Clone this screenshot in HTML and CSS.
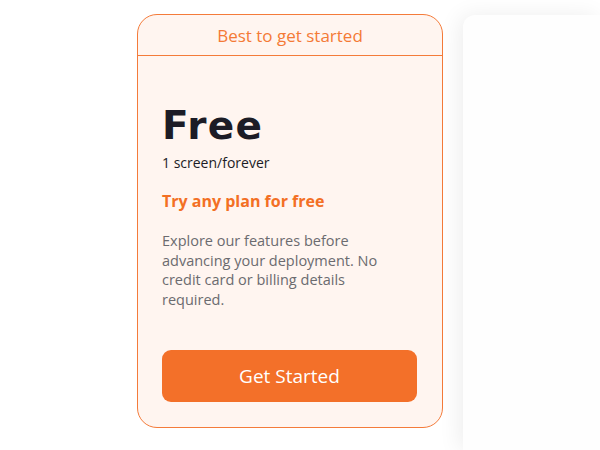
FILE: index.html
```html
<!DOCTYPE html>
<html lang="en">
<head>
<meta charset="utf-8">
<title>Pricing</title>
<link rel="stylesheet" href="styles.css">
</head>
<body>
<div class="plans">
  <div class="plan plan-featured">
    <div class="plan-header">Best to get started</div>
    <div class="plan-body">
      <div class="plan-name">Free</div>
      <div class="plan-term">1 screen/forever</div>
      <div class="plan-tagline">Try any plan for free</div>
      <p class="plan-desc">Explore our features before advancing your deployment. No credit card or billing details required.</p>
      <button class="plan-cta">Get Started</button>
    </div>
  </div>
  <div class="plan plan-next"></div>
</div>
</body>
</html>
```
FILE: styles.css
```css
html, body {
  margin: 0;
  padding: 0;
  background: #ffffff;
}
body {
  font-family: "Open Sans", sans-serif;
}
.plans {
  width: 600px;
  height: 450px;
  overflow: hidden;
  box-sizing: border-box;
  display: flex;
  align-items: flex-start;
  gap: 20px;
  padding: 14px 0 0 137px;
}
.plan {
  flex: none;
  box-sizing: border-box;
}
.plan-featured {
  width: 306px;
  height: 414px;
  border: 1px solid #f47b3a;
  border-radius: 20px;
  background: #fff5f0;
  display: flex;
  flex-direction: column;
}
.plan-header {
  box-sizing: border-box;
  height: 41px;
  border-bottom: 1px solid #f47b3a;
  display: flex;
  align-items: center;
  justify-content: center;
  color: #f47a36;
  font-size: 17px;
}
.plan-body {
  padding: 50px 24px 0 24px;
  display: flex;
  flex-direction: column;
}
.plan-name {
  font-family: "DejaVu Sans", sans-serif;
  font-size: 39px;
  line-height: 40px;
  font-weight: 700;
  color: #1c1c26;
  letter-spacing: 1.2px;
}
.plan-term {
  margin-top: 8px;
  font-size: 14px;
  line-height: 18px;
  color: #1c1c26;
}
.plan-tagline {
  margin-top: 19px;
  font-size: 16px;
  line-height: 20px;
  font-weight: 700;
  color: #f36f24;
}
.plan-desc {
  margin: 20px 0 0 0;
  max-width: 240px;
  font-size: 14.5px;
  line-height: 19.6px;
  color: #6b6b6f;
}
.plan-cta {
  margin-top: 41px;
  width: 255px;
  height: 52px;
  border: none;
  border-radius: 9px;
  background: #f37029;
  color: #ffffff;
  font-family: "Open Sans", sans-serif;
  font-size: 19px;
  cursor: pointer;
}
.plan-next {
  margin-top: 1px;
  width: 137px;
  height: 435px;
  border-radius: 12px 0 0 0;
  background: #fefefe;
  box-shadow: -4px 0 22px rgba(0, 0, 0, 0.07);
}
```
